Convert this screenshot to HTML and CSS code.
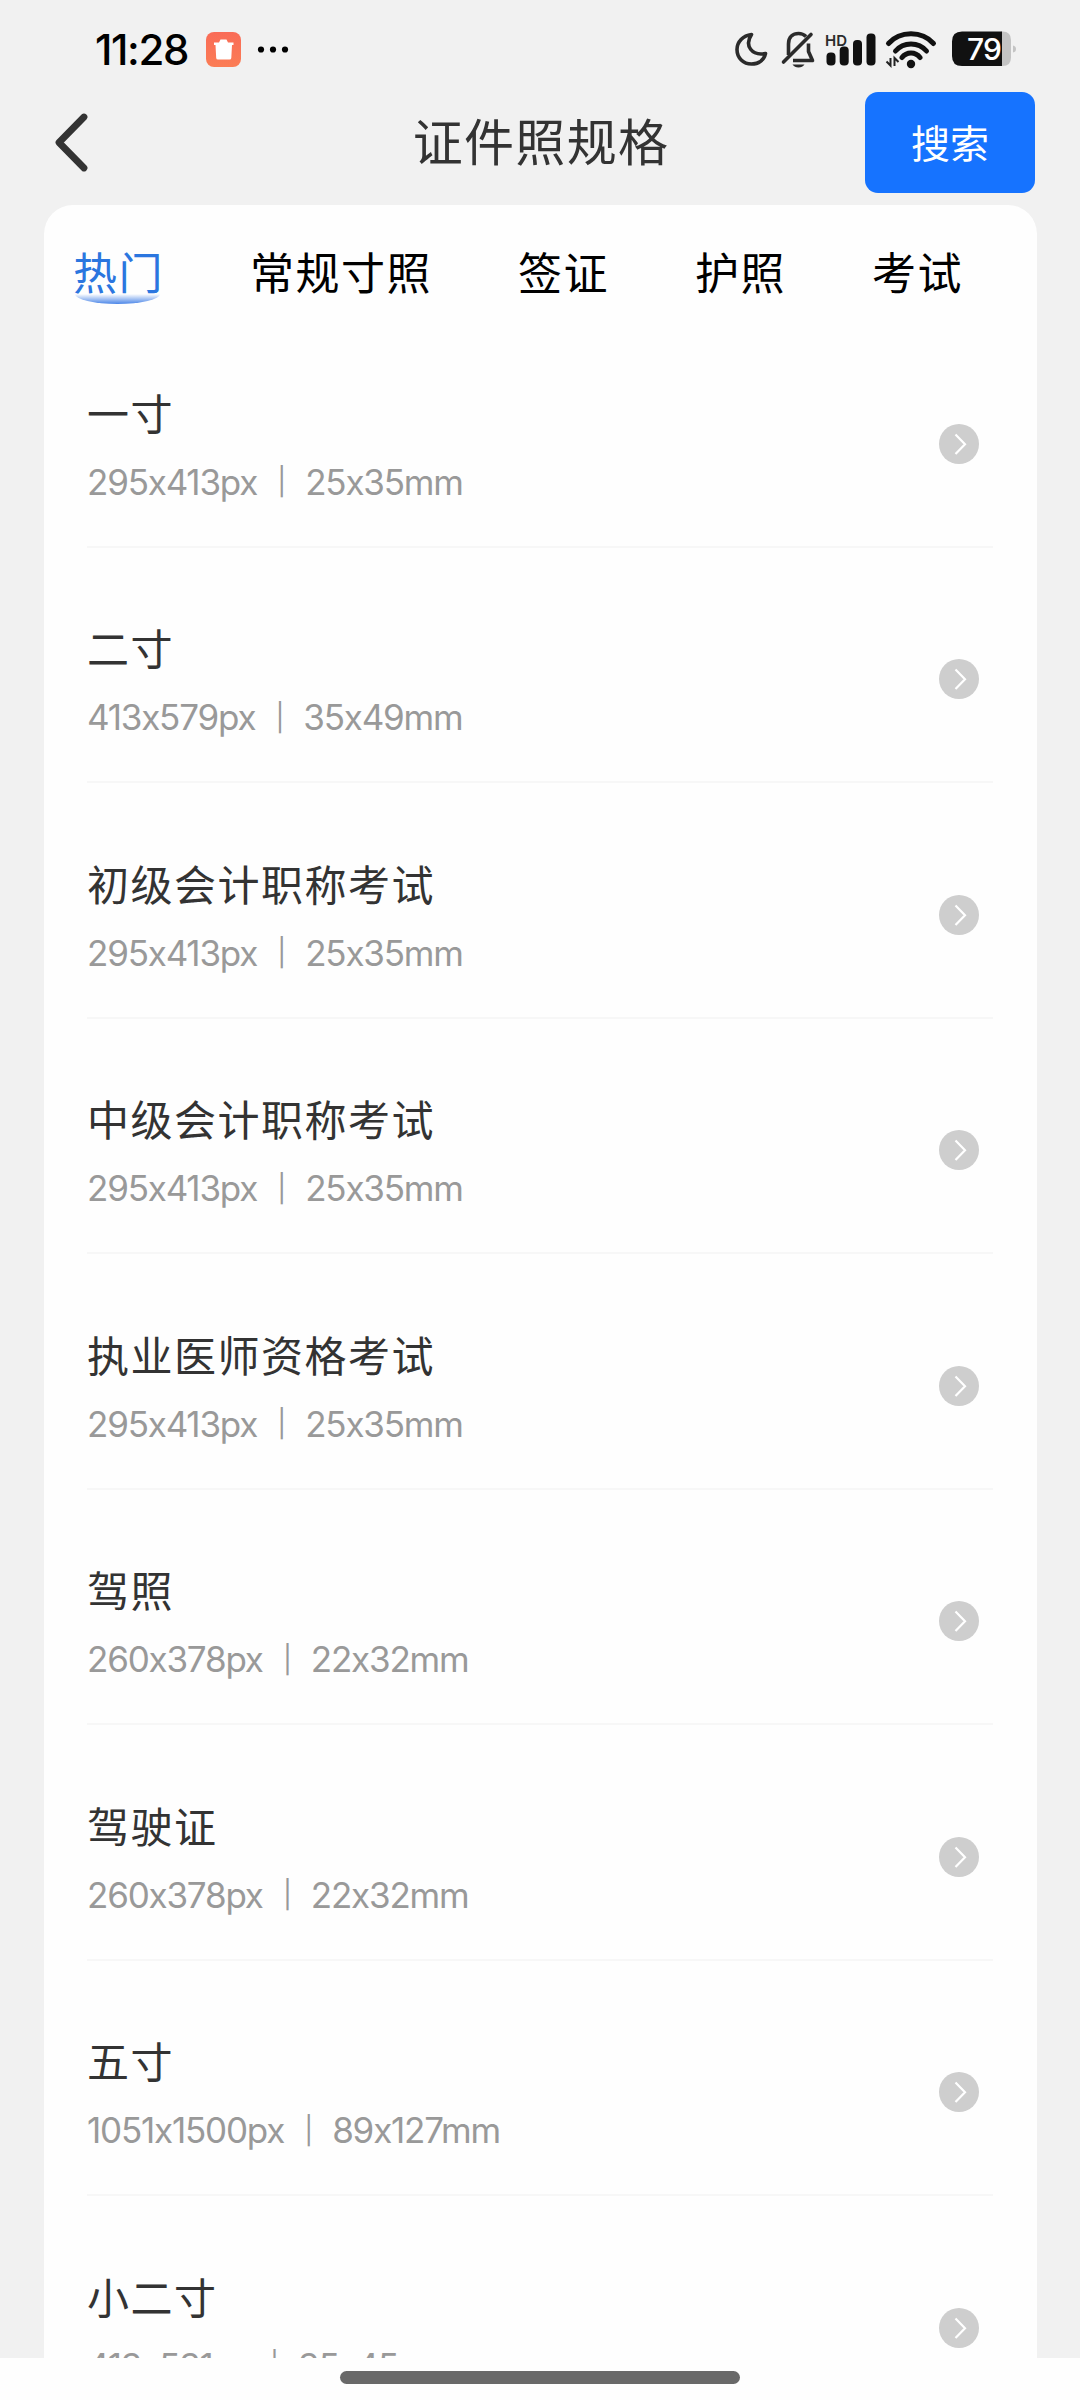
FILE: index.html
```html
<!DOCTYPE html>
<html lang="zh-CN">
<head>
    <meta charset="UTF-8">
    <meta name="viewport" content="width=device-width, initial-scale=1.0">
    <title>证件照规格</title>
    <link rel="stylesheet" href="styles.css">
</head>
<body>
    <div class="screen">
        <div class="status-bar">
            <span class="time">11:28</span>
            <svg class="status-left" width="84" height="36" viewBox="0 0 84 36">
                <defs>
                    <linearGradient id="appBg" x1="0" y1="0" x2="0" y2="1">
                        <stop offset="0" stop-color="#f96b57"/>
                        <stop offset="1" stop-color="#fb7d55"/>
                    </linearGradient>
                </defs>
                <rect x="0" y="0" width="35" height="35" rx="8" fill="url(#appBg)"/>
                <path d="M8 10.5H13L14.5 7.5H20.5L22 10.5H27.5V13H26L25.3 26Q25.2 27.5 23.5 27.5H12Q10.3 27.5 10.2 26L9.5 13H8Z" fill="#fff"/>
                <circle cx="55" cy="17.5" r="3.1"/>
                <circle cx="67" cy="17.5" r="3.1"/>
                <circle cx="79" cy="17.5" r="3.1"/>
            </svg>
            <svg class="status-right" width="290" height="44" viewBox="730 27 290 44">
                <!-- moon -->
                <path d="M751.5 34.5C743 35.5 737 42 737 49.5C737 58 743.5 64 751.5 64C758.5 64 764 60 765.5 53.5C752 56 744 46 751.5 34.5Z" fill="none" stroke="#2b2b2b" stroke-width="3.6" stroke-linejoin="round"/>
                <!-- muted bell -->
                <g fill="none" stroke="#2b2b2b" stroke-width="3.6" stroke-linejoin="round">
                    <path d="M788.5 55V44C788.5 37 793 33.5 798.5 33.5C802 33.5 804 34.5 806 36.5"/>
                    <path d="M808.5 43.5V51.5L812.5 60.5H793"/>
                    <path d="M811 34.5L783.5 62" stroke-linecap="round"/>
                </g>
                <path d="M792.5 64.5H804.5Q802.5 67.5 798.5 67.5T792.5 64.5Z" fill="#2b2b2b"/>
                <!-- signal -->
                <text class="hd" x="825" y="45.5">HD</text>
                <g fill="#111">
                    <rect x="826.5" y="52.5" width="9" height="13" rx="4"/>
                    <rect x="839.7" y="46.5" width="9" height="19" rx="4"/>
                    <rect x="853" y="40" width="9" height="25.5" rx="4"/>
                    <rect x="866.5" y="33.5" width="9" height="32" rx="4"/>
                </g>
                <!-- wifi -->
                <g fill="none" stroke="#111" stroke-width="5" stroke-linecap="round">
                    <path d="M888.5 43.5C900 30.5 922 30.5 933.5 43.5"/>
                    <path d="M895.5 51C903.5 41.5 918.5 41.5 926.5 51"/>
                    <path d="M902 57.5C906.5 51.5 915.5 51.5 920 57.5"/>
                </g>
                <circle cx="911" cy="64" r="4.2" fill="#111"/>
                <path d="M890.5 58V65.5L886.5 61.5M894.5 66V58L898.5 62" fill="none" stroke="#222" stroke-width="2"/>
                <!-- battery -->
                <path d="M1001 31.5H1002.5Q1011 31.5 1011 40V57.5Q1011 66 1002.5 66H1001Z" fill="#c4c4c4"/>
                <path d="M962 31.5H1002V66H962Q952 66 952 56V41.5Q952 31.5 962 31.5Z" fill="#111"/>
                <path d="M1013 45.5Q1016 46 1016 49T1013 52.5Z" fill="#c4c4c4"/>
                <text class="battery-level" x="967" y="59.5" textLength="35">79</text>
            </svg>
        </div>

        <div class="header">
            <svg class="back" width="36" height="64" viewBox="0 0 36 64">
                <path d="M30 6L5 31.5L30 57" fill="none" stroke="#333" stroke-width="6.8" stroke-linecap="round" stroke-linejoin="round"/>
            </svg>
            <h1>证件照规格</h1>
            <button class="search">搜索</button>
        </div>

        <div class="card">
            <div class="tabs">
                <span class="tab active">热门</span>
                <span class="tab">常规寸照</span>
                <span class="tab">签证</span>
                <span class="tab">护照</span>
                <span class="tab">考试</span>
            </div>
            <div class="list" id="specList"></div>
        </div>
    </div>
    <div class="nav-bar"><div class="handle"></div></div>

    <script>
        const specs = [
            ['一寸', '295x413px', '25x35mm'],
            ['二寸', '413x579px', '35x49mm'],
            ['初级会计职称考试', '295x413px', '25x35mm'],
            ['中级会计职称考试', '295x413px', '25x35mm'],
            ['执业医师资格考试', '295x413px', '25x35mm'],
            ['驾照', '260x378px', '22x32mm'],
            ['驾驶证', '260x378px', '22x32mm'],
            ['五寸', '1051x1500px', '89x127mm'],
            ['小二寸', '413x531px', '35x45mm']
        ];

        document.getElementById('specList').innerHTML = specs.map(([name, px, mm]) => `
            <div class="item">
                <div class="info">
                    <div class="name">${name}</div>
                    <div class="size"><span>${px}</span><span class="bar">|</span><span>${mm}</span></div>
                </div>
                <svg class="arrow" width="40" height="40" viewBox="0 0 40 40">
                    <circle cx="20" cy="20" r="20" fill="#cecece"/>
                    <path d="M16.5 10.5L26 20.3L16.5 30" fill="none" stroke="#fff" stroke-width="2.2"/>
                </svg>
            </div>`).join('');
    </script>
</body>
</html>
```
FILE: styles.css
```css
* {
    box-sizing: border-box;
}
body {
    margin: 0;
    height: 2400px;
    overflow: hidden;
    background-color: #fefefe;
    font-family: Inter, 'Noto Sans CJK SC', sans-serif;
    color: #333;
}
.screen {
    height: 2358px;
    overflow: hidden;
    background-color: #f1f1f1;
}
.status-bar {
    display: flex;
    align-items: flex-start;
    height: 92px;
    padding: 28px 60px 0 95px;
    color: #000;
}
.time {
    width: 111px;
    font-size: 42px;
    font-weight: 500;
    line-height: 44px;
    letter-spacing: -1.4px;
    white-space: nowrap;
}
.status-left {
    margin-top: 4px;
}
.status-right {
    margin-left: auto;
    margin-top: -1px;
}
.hd {
    font-size: 15px;
    font-weight: 600;
    fill: #2b2b2b;
}
.battery-level {
    font-size: 30px;
    font-weight: 500;
    fill: #fff;
}
.header {
    display: flex;
    align-items: center;
    justify-content: space-between;
    height: 101px;
    padding: 0 45px 0 54px;
}
.back {
    margin-right: 127px;
}
h1 {
    margin: 0;
    font-size: 50px;
    font-weight: 400;
    line-height: 72px;
    letter-spacing: 1.3px;
}
.search {
    width: 170px;
    height: 101px;
    padding: 0 0 4px;
    border: none;
    border-radius: 13px;
    background-color: #1673ff;
    color: #fff;
    font-family: inherit;
    font-size: 39px;
}
.card {
    height: 2200px;
    margin: 12px 43px 0 44px;
    border-radius: 29px 29px 0 0;
    background-color: #fefefe;
}
.tabs {
    display: flex;
    gap: 86px;
    padding: 37px 0 0 29px;
    height: 107px;
    font-size: 44px;
    line-height: 64px;
    letter-spacing: 1.5px;
    color: #000;
}
.tab {
    position: relative;
    white-space: nowrap;
}
.active {
    color: #2b76df;
}
.active::after {
    content: '';
    position: absolute;
    left: 2px;
    top: 52px;
    width: 85px;
    height: 10px;
    border-radius: 0 0 50% 50% / 0 0 100% 100%;
    background: linear-gradient(rgba(255, 255, 255, 0), #4b86e8);
}
.item {
    display: flex;
    align-items: center;
    justify-content: space-between;
    height: 235.5px;
    margin: 0 44px 0 43px;
    padding-right: 14px;
    border-bottom: 2px solid #f7f7f7;
}
.info {
    padding-top: 34px;
}
.name {
    font-size: 42px;
    line-height: 60px;
    letter-spacing: 1.5px;
}
.size {
    display: flex;
    align-items: center;
    height: 50px;
    margin-top: 12px;
    font-size: 35px;
    font-weight: 400;
    letter-spacing: -1.2px;
    color: #999;
}
.bar {
    width: 48px;
    text-align: center;
    font-size: 27px;
}
.arrow {
    margin-top: 30px;
}
.nav-bar {
    display: flex;
    justify-content: center;
    padding-top: 13px;
}
.handle {
    width: 400px;
    height: 13px;
    border-radius: 7px;
    background-color: #696969;
}
```
